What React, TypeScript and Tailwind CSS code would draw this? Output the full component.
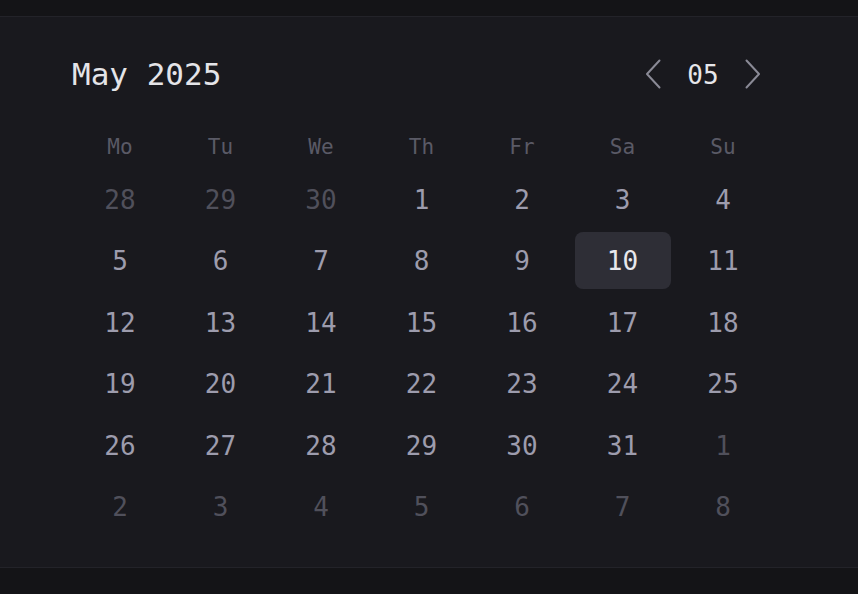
import React from "react";

type Day = { n: number; cur: boolean };

const weeks: Day[][] = (() => {
  const all: Day[] = [];
  [28, 29, 30].forEach((n) => all.push({ n, cur: false }));
  for (let i = 1; i <= 31; i++) all.push({ n: i, cur: true });
  for (let i = 1; i <= 8; i++) all.push({ n: i, cur: false });
  const w: Day[][] = [];
  for (let i = 0; i < 6; i++) w.push(all.slice(i * 7, i * 7 + 7));
  return w;
})();

const labels = ["Mo", "Tu", "We", "Th", "Fr", "Sa", "Su"];

function Chevron({ dir }: { dir: "l" | "r" }) {
  return (
    <svg width="16" height="30" viewBox="0 0 16 30" fill="none">
      <path
        d={dir === "l" ? "M14.5 1.5 L2 15 L14.5 28.5" : "M1.5 1.5 L14 15 L1.5 28.5"}
        stroke="#8a8a96"
        strokeWidth="2"
        strokeLinecap="round"
        strokeLinejoin="round"
      />
    </svg>
  );
}

export default function App() {
  return (
    <div
      className="w-[858px] h-[594px] bg-[#141417] flex flex-col overflow-hidden"
      style={{ fontFamily: '"DejaVu Sans Mono", "Liberation Mono", monospace' }}
    >
      <div className="h-[17px] shrink-0 border-b border-[#232329]" />
      <div className="h-[551px] shrink-0 bg-[#19191e] border-b border-[#232329] pl-[72px] pt-[33px]">
        <div className="w-[699px] h-[48px] flex items-center justify-between">
          <div className="text-[31px] text-[#e4e4e8] leading-none">May 2025</div>
          <div className="flex items-center mr-[8px]">
            <div className="w-[20px] flex justify-center">
              <Chevron dir="l" />
            </div>
            <div className="w-[80px] text-center text-[26px] text-[#e6e6ea] leading-none pt-[1px]">05</div>
            <div className="w-[20px] flex justify-center">
              <Chevron dir="r" />
            </div>
          </div>
        </div>
        <div className="w-[699px] mt-[24px] grid grid-cols-7 gap-x-[4.5px] h-[48px] pt-[3px]">
          {labels.map((l) => (
            <div key={l} className="flex items-center justify-center text-[21px] text-[#5a5a66]">
              {l}
            </div>
          ))}
        </div>
        <div className="w-[699px] mt-[0.5px] grid grid-cols-7 gap-x-[4.5px] gap-y-[4.5px]">
          {weeks.flat().map((d, i) => {
            const sel = d.cur && d.n === 10;
            return (
              <div
                key={i}
                className={
                  "h-[57px] flex items-center justify-center text-[26px] rounded-[8px] pt-[2px] " +
                  (sel
                    ? "bg-[#2e2e36] text-[#e8e8ec]"
                    : d.cur
                    ? "text-[#9d9cad]"
                    : "text-[#50505b]")
                }
              >
                {d.n}
              </div>
            );
          })}
        </div>
      </div>
      <div className="flex-1" />
    </div>
  );
}
